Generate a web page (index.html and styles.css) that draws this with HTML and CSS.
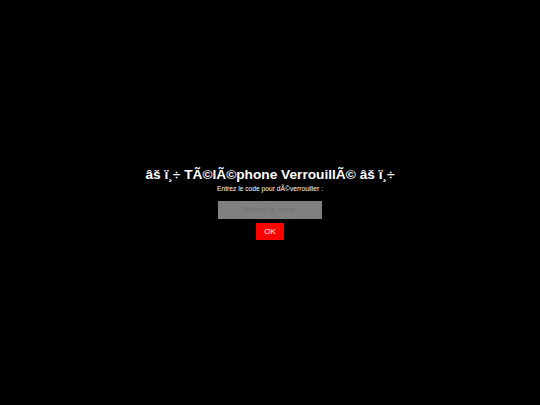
FILE: index.html
```html
<!DOCTYPE html>
<html lang="fr">
<head>
<meta charset="utf-8">
<title>Verrouillé</title>
<link rel="stylesheet" href="styles.css">
</head>
<body>
<main class="lock">
  <h1 class="title">âš&nbsp;ï¸÷ TÃ©lÃ©phone VerrouillÃ© âš&nbsp;ï¸÷</h1>
  <p class="hint">Entrez le code pour dÃ©verrouiller :</p>
  <input class="code" type="password" placeholder="Entrez le code">
  <button class="ok">OK</button>
</main>
</body>
</html>
```
FILE: styles.css
```css
html, body {
  margin: 0;
  padding: 0;
  height: 100%;
  background: #000;
}
.lock {
  height: 100%;
  display: flex;
  flex-direction: column;
  align-items: center;
  justify-content: center;
  color: #fff;
  font-family: "Liberation Sans", Arial, sans-serif;
}
.title {
  font-size: 13.7px;
  font-weight: bold;
  margin: 0;
  line-height: 18px;
}
.hint {
  font-size: 6.7px;
  margin: 0 0 8px;
  line-height: 9px;
}
.code {
  box-sizing: border-box;
  width: 104px;
  height: 18px;
  border: none;
  background: #808080;
  color: #fff;
  text-align: center;
  font-family: "Liberation Sans", Arial, sans-serif;
  font-size: 8px;
  padding: 0;
  margin: 0 0 4px;
  outline: none;
}
.code::placeholder {
  color: #727272;
}
.ok {
  box-sizing: border-box;
  width: 28px;
  height: 17px;
  border: none;
  background: #ff0000;
  color: #fff;
  font-family: "Liberation Sans", Arial, sans-serif;
  font-size: 8px;
  padding: 0;
}
```
